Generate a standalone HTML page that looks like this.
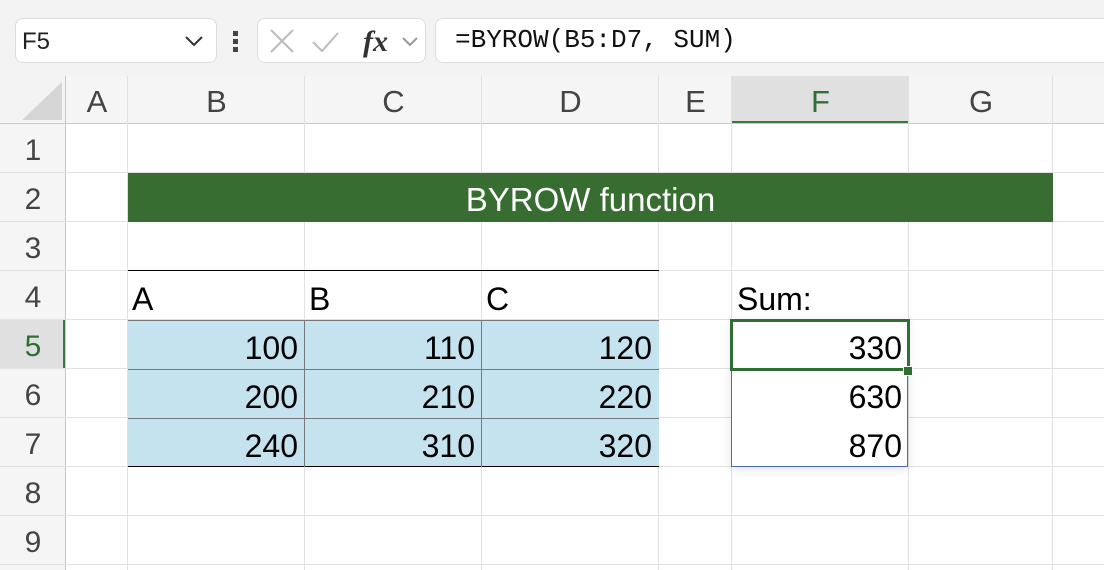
<!DOCTYPE html><html><head><style>
body{margin:0;width:1104px;height:570px;overflow:hidden;background:#f3f3f3;font-family:"Liberation Sans",sans-serif;position:relative}
.a{position:absolute}
.v{position:absolute;width:1px;background:#e1e1e1}
.h{position:absolute;height:1px;background:#e1e1e1}
.ch{position:absolute;top:76px;height:48px;line-height:52px;text-align:center;font-size:31px;color:#444}
.rh{position:absolute;left:0;width:66px;text-align:center;font-size:30px;color:#444;height:49px;line-height:54px}
.c{position:absolute;font-size:32px;color:#000;height:49px;line-height:56px;box-sizing:border-box}
.r{text-align:right;padding-right:7px}
</style></head><body>
<!-- formula bar -->
<div class="a" style="left:15px;top:18px;width:200px;height:43px;background:#fff;border:1px solid #ddd;border-radius:8px"></div>
<div class="a" style="left:22px;top:28px;font-size:24px;color:#222">F5</div>
<svg class="a" style="left:183px;top:34px" width="22" height="14"><path d="M3 3l8 8 8-8" stroke="#333" stroke-width="2" fill="none"/></svg>
<div class="a" style="left:233px;top:31px;width:5px;height:5px;background:#444"></div>
<div class="a" style="left:233px;top:39px;width:5px;height:5px;background:#444"></div>
<div class="a" style="left:233px;top:47px;width:5px;height:5px;background:#444"></div>
<div class="a" style="left:257px;top:18px;width:167px;height:43px;background:#fff;border:1px solid #ddd;border-radius:8px"></div>
<svg class="a" style="left:265px;top:26px" width="160" height="32"><path d="M6 4l22 22M28 4L6 26" stroke="#bbb" stroke-width="2" fill="none"/><path d="M48 16l9 9 16-18" stroke="#bbb" stroke-width="2" fill="none"/><text x="98" y="25" font-family="Liberation Serif" font-style="italic" font-weight="bold" font-size="30" fill="#333">fx</text><path d="M138 12l7 7 7-7" stroke="#999" stroke-width="2" fill="none"/></svg>
<div class="a" style="left:435px;top:18px;width:680px;height:43px;background:#fff;border:1px solid #ddd;border-radius:8px 0 0 8px"></div>
<div class="a" style="left:455px;top:25px;font-size:26px;font-family:'Liberation Mono',monospace;color:#111">=BYROW(B5:D7, SUM)</div>
<!-- grid -->
<div class="a" style="left:66px;top:124px;width:1038px;height:446px;background:#fff"></div>
<div class="a" style="left:66px;top:76px;width:1038px;height:48px;background:#f5f5f5"></div>
<div class="a" style="left:732px;top:76px;width:177px;height:46px;background:#e0e0e0"></div>
<div class="a" style="left:732px;top:121px;width:177px;height:3px;background:#3a7a3e"></div>
<div class="a" style="left:0;top:124px;width:66px;height:446px;background:#f5f5f5"></div>
<div class="a" style="left:0;top:320px;width:66px;height:49px;background:#e0e0e0"></div>
<div class="a" style="left:63px;top:320px;width:3px;height:49px;background:#3a7a3e"></div>
<svg class="a" style="left:20px;top:80px" width="44" height="42"><path d="M42 2V40H2Z" fill="#d5d5d5"/></svg>
<div class="a" style="left:0;top:123px;width:1104px;height:1px;background:#c8c8c8"></div>
<div class="a" style="left:65px;top:76px;width:1px;height:494px;background:#c8c8c8"></div>
<div class="v" style="left:127px;top:76px;height:494px"></div>
<div class="v" style="left:304px;top:76px;height:494px"></div>
<div class="v" style="left:481px;top:76px;height:494px"></div>
<div class="v" style="left:658px;top:76px;height:494px"></div>
<div class="v" style="left:731px;top:76px;height:494px"></div>
<div class="v" style="left:908px;top:76px;height:494px"></div>
<div class="v" style="left:1052px;top:76px;height:494px"></div>
<div class="h" style="left:0;top:172px;width:1104px"></div>
<div class="h" style="left:0;top:221px;width:1104px"></div>
<div class="h" style="left:0;top:270px;width:1104px"></div>
<div class="h" style="left:0;top:319px;width:1104px"></div>
<div class="h" style="left:0;top:368px;width:1104px"></div>
<div class="h" style="left:0;top:417px;width:1104px"></div>
<div class="h" style="left:0;top:466px;width:1104px"></div>
<div class="h" style="left:0;top:515px;width:1104px"></div>
<div class="h" style="left:0;top:564px;width:1104px"></div>
<div class="ch" style="left:66px;width:62px">A</div>
<div class="ch" style="left:128px;width:177px">B</div>
<div class="ch" style="left:305px;width:177px">C</div>
<div class="ch" style="left:482px;width:177px">D</div>
<div class="ch" style="left:659px;width:73px">E</div>
<div class="ch" style="left:732px;width:177px;color:#2f6f33">F</div>
<div class="ch" style="left:909px;width:144px">G</div>
<div class="rh" style="top:124px">1</div><div class="rh" style="top:173px">2</div><div class="rh" style="top:222px">3</div><div class="rh" style="top:271px">4</div><div class="rh" style="top:320px;color:#2f6f33">5</div><div class="rh" style="top:369px">6</div><div class="rh" style="top:418px">7</div><div class="rh" style="top:467px">8</div><div class="rh" style="top:516px">9</div>
<!-- banner -->
<div class="a" style="left:128px;top:173px;width:925px;height:49px;background:#376d31;color:#fff;font-size:33px;text-align:center;line-height:54px">BYROW function</div>
<!-- table -->
<div class="a" style="left:128px;top:270px;width:531px;height:1px;background:#000"></div>
<div class="a" style="left:128px;top:320px;width:531px;height:147px;background:#c5e3ef"></div>
<div class="a" style="left:128px;top:320px;width:531px;height:1px;background:#777"></div>
<div class="a" style="left:128px;top:369px;width:531px;height:1px;background:#777"></div>
<div class="a" style="left:128px;top:418px;width:531px;height:1px;background:#777"></div>
<div class="a" style="left:128px;top:466px;width:531px;height:1px;background:#000"></div>
<div class="a" style="left:304px;top:320px;width:1px;height:147px;background:#777"></div>
<div class="a" style="left:481px;top:320px;width:1px;height:147px;background:#777"></div>
<div class="c" style="left:132px;top:271px">A</div><div class="c" style="left:309px;top:271px">B</div><div class="c" style="left:486px;top:271px">C</div>
<div class="c r" style="left:128px;top:320px;width:177px">100</div><div class="c r" style="left:305px;top:320px;width:177px">110</div><div class="c r" style="left:482px;top:320px;width:177px">120</div>
<div class="c r" style="left:128px;top:369px;width:177px">200</div><div class="c r" style="left:305px;top:369px;width:177px">210</div><div class="c r" style="left:482px;top:369px;width:177px">220</div>
<div class="c r" style="left:128px;top:418px;width:177px">240</div><div class="c r" style="left:305px;top:418px;width:177px">310</div><div class="c r" style="left:482px;top:418px;width:177px">320</div>
<!-- sum -->
<div class="c" style="left:737px;top:271px">Sum:</div>
<div class="a" style="left:731px;top:320px;width:177px;height:147px;border:1px solid #4a6bb5;box-sizing:border-box;box-shadow:0 2px 10px rgba(0,0,0,.12);background:#fff"></div>
<div class="a" style="left:730px;top:319px;width:180px;height:52px;border:3px solid #2f6f33;box-sizing:border-box"></div>
<div class="a" style="left:903px;top:366px;width:8px;height:8px;background:#2f6f33;border:1px solid #fff"></div>
<div class="c r" style="left:732px;top:320px;width:177px">330</div>
<div class="c r" style="left:732px;top:369px;width:177px">630</div>
<div class="c r" style="left:732px;top:418px;width:177px">870</div>
</body></html>
